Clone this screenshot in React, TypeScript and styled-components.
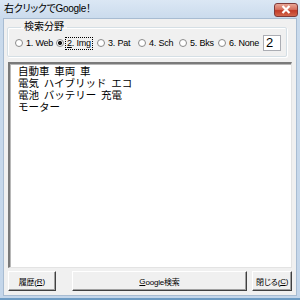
import styled, { createGlobalStyle } from "styled-components";

const GlobalStyle = createGlobalStyle`
    html, body {
        margin: 0;
        padding: 0;
        background: #ffffff;
    }
    body {
        font-family: "Liberation Sans", "Noto Sans CJK JP", sans-serif;
    }
`;

const choices = ["1. Web", "2. Img", "3. Pat", "4. Sch", "5. Bks", "6. None"];
const widths = [41, 41, 41, 41, 39, 44];

const lines = ["自動車  車両  車", "電気  ハイブリッド  エコ", "電池  バッテリー  充電", "モーター"];

const App = () => {
    return (
        <Wrapper>
            <GlobalStyle />
            <TitleBar>
                <Title>右クリックでGoogle！</Title>
                <CloseButton>
                    <svg width="10" height="9" viewBox="0 0 10 9">
                        <path d="M1.5 1 L8.5 8 M8.5 1 L1.5 8" stroke="#ffffff" strokeWidth="2.2" />
                    </svg>
                </CloseButton>
            </TitleBar>
            <Client>
                <Group>
                    <Legend>検索分野</Legend>
                    <RadioRow>
                        {choices.map((c, i) => (
                            <RadioItem key={c} $width={widths[i]}>
                                <RadioDot $checked={i === 1} />
                                <RadioLabel $focus={i === 1}>
                                    {i === 1 ? (
                                        <>
                                            <u>2</u>. Img
                                        </>
                                    ) : (
                                        c
                                    )}
                                </RadioLabel>
                            </RadioItem>
                        ))}
                        <NumberBox>2</NumberBox>
                    </RadioRow>
                </Group>
                <TextArea>
                    {lines.map((l) => (
                        <Line key={l}>{l}</Line>
                    ))}
                </TextArea>
                <ButtonRow>
                    <Button $width={48}>
                        履歴(<u>R</u>)
                    </Button>
                    <Button $width={177}>
                        <u>G</u>oogle検索
                    </Button>
                    <Button $width={40}>
                        閉じる(<u>C</u>)
                    </Button>
                </ButtonRow>
            </Client>
        </Wrapper>
    );
};

const Wrapper = styled.div`
    width: 300px;
    height: 300px;
    box-sizing: border-box;
    display: flex;
    flex-direction: column;
    background: linear-gradient(to bottom, #dbe7f4 0px, #c9daec 20px, #c4d6ea 100%);
    border-bottom: 2px solid #6e9cc4;
`;

const TitleBar = styled.div`
    height: 18px;
    display: flex;
    align-items: center;
    justify-content: space-between;
    padding: 0 2px 0 4px;
`;

const Title = styled.div`
    font-size: 10px;
    font-feature-settings: "palt";
    letter-spacing: -0.3px;
    color: #000000;
    line-height: 14px;
`;

const CloseButton = styled.div`
    width: 22px;
    height: 12px;
    margin-top: 1px;
    border: 1px solid #7e3a3a;
    border-radius: 3px;
    background: linear-gradient(to bottom, #e8a596 0%, #d5705f 45%, #c23b28 55%, #d2654b 100%);
    display: flex;
    align-items: center;
    justify-content: center;
`;

const Client = styled.div`
    flex: 1;
    margin: 0 3px 2px 3px;
    padding: 2px 4px 4px 3px;
    background: #f0f0f0;
    border: 1px solid #a8bcd2;
    display: flex;
    flex-direction: column;
    min-height: 0;
`;

const Group = styled.fieldset`
    margin: 0 5px 0 0;
    padding: 0 4px 5px 7px;
    border: 1px solid #d5dfe5;
    border-radius: 2px;
    box-shadow: inset 1px 1px 0 #ffffff, 1px 1px 0 #ffffff;
`;

const Legend = styled.legend`
    margin-left: 6px;
    padding: 0 3px;
    font-size: 10px;
    line-height: 12px;
    color: #000000;
`;

const RadioRow = styled.div`
    display: flex;
    align-items: center;
    height: 16px;
    margin-top: 2px;
`;

const RadioItem = styled.div<{ $width: number }>`
    width: ${(p) => p.$width}px;
    flex-shrink: 0;
    display: flex;
    align-items: center;
    gap: 2px;
`;

const RadioDot = styled.span<{ $checked: boolean }>`
    width: 6px;
    height: 6px;
    border-radius: 50%;
    border: 1px solid #8a8a8a;
    background: #ffffff;
    box-sizing: content-box;
    flex-shrink: 0;
    background-image: ${(p) =>
        p.$checked ? "radial-gradient(circle, #1a1a1a 0 1.8px, #ffffff 2.3px)" : "none"};
`;

const RadioLabel = styled.span<{ $focus: boolean }>`
    font-size: 9px;
    line-height: 11px;
    white-space: nowrap;
    letter-spacing: -0.2px;
    color: #000000;
    padding: 0 1px;
    outline: ${(p) => (p.$focus ? "1px dotted #000000" : "none")};
`;

const NumberBox = styled.div`
    width: 14px;
    height: 14px;
    margin-left: 1px;
    border: 1px solid #abadb3;
    background: #ffffff;
    font-size: 13px;
    line-height: 14px;
    padding-left: 2px;
    color: #000000;
`;

const TextArea = styled.div`
    flex: 1;
    margin: 5px 0 0 1px;
    padding: 1px 8px;
    background: #ffffff;
    border-style: solid;
    border-width: 2px 1px 1px 2px;
    border-color: #7a7a7a #e3e3e3 #e3e3e3 #7a7a7a;
    box-shadow: inset 1px 1px 0 #b8b8b8;
`;

const Line = styled.div`
    font-family: "Noto Sans CJK JP", sans-serif;
    font-size: 10.5px;
    line-height: 12px;
    color: #000000;
    white-space: pre;
`;

const ButtonRow = styled.div`
    display: flex;
    margin-top: 3px;
    margin-left: 1px;
    height: 20px;
    & > *:nth-child(2) {
        margin-left: 16px;
        margin-right: 5px;
    }
`;

const Button = styled.div<{ $width: number }>`
    width: ${(p) => p.$width}px;
    box-sizing: border-box;
    height: 20px;
    display: flex;
    align-items: center;
    justify-content: center;
    font-size: 8px;
    font-feature-settings: "palt";
    letter-spacing: -0.2px;
    white-space: nowrap;
    color: #000000;
    background: #f0f0f0;
    border-style: solid;
    border-width: 1px;
    border-color: #ffffff #404040 #404040 #ffffff;
    box-shadow: inset -1px -1px 0 #a0a0a0;
`;

export default App;
